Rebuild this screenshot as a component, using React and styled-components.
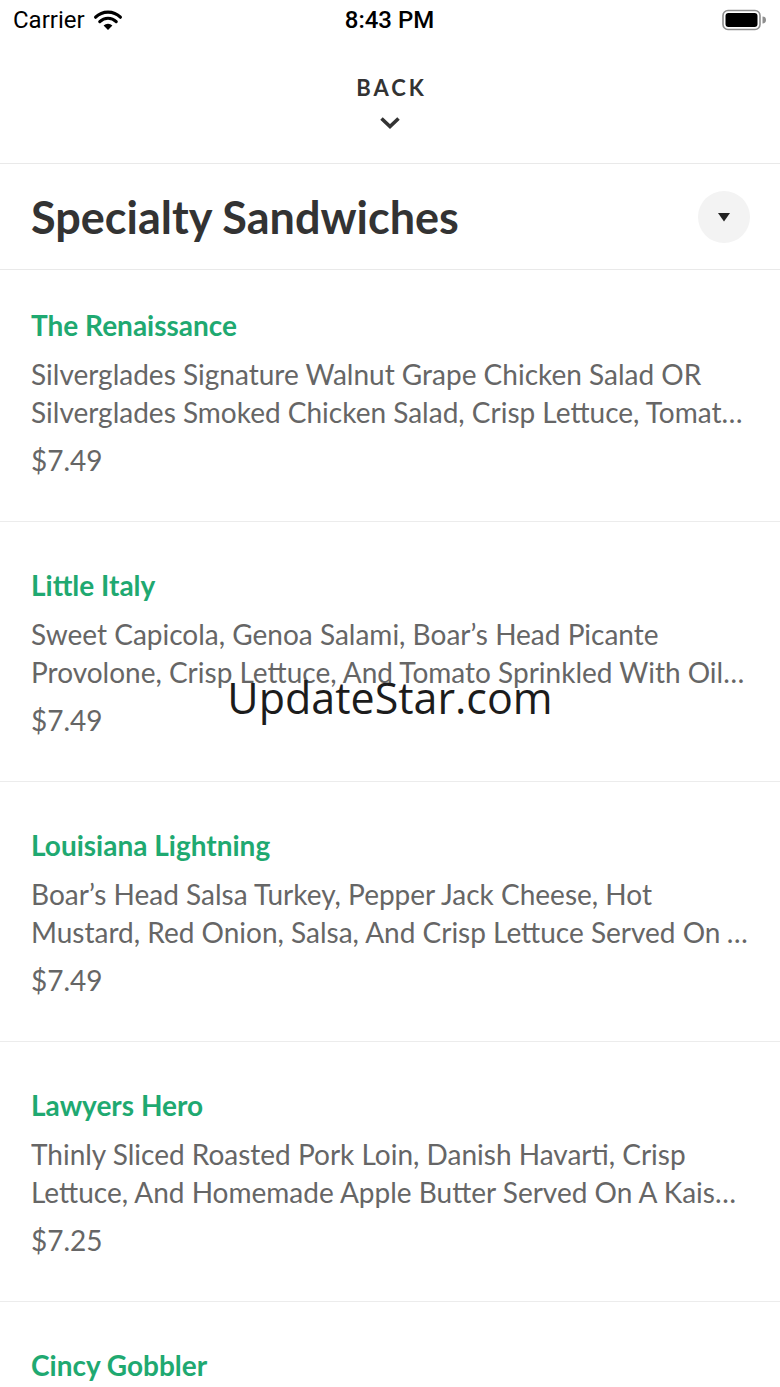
import React from 'react';
import styled, { createGlobalStyle } from 'styled-components';

const GlobalStyle = createGlobalStyle`
  body {
    margin: 0;
    background: #ffffff;
    font-family: Lato, "Open Sans", sans-serif;
  }
  * { box-sizing: border-box; }
`;

const Screen = styled.div`
  position: relative;
  width: 780px;
  height: 1387px;
  overflow: hidden;
  background: #ffffff;
`;

const StatusBar = styled.div`
  height: 40px;
  display: grid;
  grid-template-columns: 1fr auto 1fr;
  align-items: center;
  padding: 0 14px 0 13px;
  font-family: Roboto, "Liberation Sans", sans-serif;
  color: #000;
`;

const Carrier = styled.div`
  display: flex;
  align-items: center;
  gap: 8px;
  font-size: 24px;
`;

const Clock = styled.div`
  font-size: 24px;
  font-weight: 500;
`;

const BatteryWrap = styled.div`
  display: flex;
  justify-content: flex-end;
`;

const BackBar = styled.div`
  height: 124px;
  display: flex;
  flex-direction: column;
  align-items: center;
  padding-top: 34px;
  border-bottom: 1px solid #e9e9e9;
`;

const BackLabel = styled.div`
  font-size: 22px;
  font-weight: 700;
  letter-spacing: 3px;
  color: #333;
  line-height: 28px;
  margin-left: 3px;
`;

const Chevron = styled.div`
  margin-top: 14px;
  height: 14px;
  display: flex;
`;

const CategoryHeader = styled.div`
  height: 106px;
  display: flex;
  align-items: center;
  justify-content: space-between;
  padding: 0 31px;
  border-bottom: 1px solid #e9e9e9;
`;

const CategoryTitle = styled.h1`
  margin: 0;
  font-size: 45px;
  font-weight: 700;
  color: #333;
  line-height: 52px;
`;

const ToggleButton = styled.button`
  width: 52px;
  height: 52px;
  border-radius: 50%;
  border: none;
  background: #f3f3f3;
  display: flex;
  align-items: center;
  justify-content: center;
  padding: 0;
  margin-right: -1px;
`;

const Item = styled.div`
  padding: ${p => (p.first ? '35px' : '43px')} 31px 42px;
  border-bottom: 1px solid #ececec;
`;

const ItemTitle = styled.div`
  font-size: 28px;
  font-weight: 700;
  color: #1fa971;
  line-height: 40px;
`;

const ItemDesc = styled.div`
  margin-top: 10px;
  font-size: 28px;
  line-height: 38px;
  color: #666;
  display: -webkit-box;
  -webkit-line-clamp: 2;
  -webkit-box-orient: vertical;
  overflow: hidden;
`;

const ItemPrice = styled.div`
  margin-top: 10px;
  font-size: 28px;
  line-height: 38px;
  color: #666;
`;

const Watermark = styled.div`
  position: absolute;
  left: 0;
  right: 0;
  top: 670px;
  text-align: center;
  font-family: "Open Sans", "Noto Sans", sans-serif;
  font-size: 43px;
  line-height: 56px;
  color: #1c1c1c;
  pointer-events: none;
`;

const Wifi = () => (
  <svg width="30" height="22" viewBox="0 0 30 22">
    <path d="M15 21 L10.6 16.4 A6.5 6.5 0 0 1 19.4 16.4 Z" fill="#000" />
    <path d="M6.8 12.6 A11.7 11.7 0 0 1 23.2 12.6" stroke="#000" strokeWidth="3.2" fill="none" strokeLinecap="round" />
    <path d="M2.6 8.2 A17.6 17.6 0 0 1 27.4 8.2" stroke="#000" strokeWidth="3.2" fill="none" strokeLinecap="round" />
  </svg>
);

const Battery = () => (
  <svg width="44" height="22" viewBox="0 0 44 22">
    <rect x="1" y="1.5" width="37" height="19" rx="5" fill="none" stroke="#8e8e8e" strokeWidth="1.6" />
    <rect x="3.5" y="4" width="32" height="14" rx="3" fill="#000" />
    <path d="M40.5 7.5 A3.5 3.5 0 0 1 40.5 14.5 Z" fill="#8e8e8e" />
  </svg>
);

const items = [
  {
    name: 'The Renaissance',
    desc: 'Silverglades Signature Walnut Grape Chicken Salad OR Silverglades Smoked Chicken Salad, Crisp Lettuce, Tomato And Red Onion Served On A Croissant',
    price: '$7.49',
  },
  {
    name: 'Little Italy',
    desc: 'Sweet Capicola, Genoa Salami, Boar\u2019s Head Picante Provolone, Crisp Lettuce, And Tomato Sprinkled With Oil And Vinegar Served On A Hoagie',
    price: '$7.49',
  },
  {
    name: 'Louisiana Lightning',
    desc: 'Boar\u2019s Head Salsa Turkey, Pepper Jack Cheese, Hot Mustard, Red Onion, Salsa, And Crisp Lettuce Served On A Jalapeño Bun',
    price: '$7.49',
  },
  {
    name: 'Lawyers Hero',
    desc: 'Thinly Sliced Roasted Pork Loin, Danish Havarti, Crisp Lettuce, And Homemade Apple Butter Served On A Kaiser Roll',
    price: '$7.25',
  },
  {
    name: 'Cincy Gobbler',
    desc: 'Boar\u2019s Head Ovengold Turkey, Swiss Cheese, Crisp Lettuce, Tomato And Cranberry Mayo Served On Wheat Berry Bread',
    price: '$7.49',
  },
];

export default function App() {
  return (
    <Screen>
      <GlobalStyle />
      <StatusBar>
        <Carrier>
          Carrier
          <Wifi />
        </Carrier>
        <Clock>8:43 PM</Clock>
        <BatteryWrap>
          <Battery />
        </BatteryWrap>
      </StatusBar>
      <BackBar>
        <BackLabel>BACK</BackLabel>
        <Chevron>
          <svg width="22" height="14" viewBox="0 0 22 14">
            <path d="M2.5 2.5 L11 10.5 L19.5 2.5" stroke="#333" strokeWidth="3.6" fill="none" />
          </svg>
        </Chevron>
      </BackBar>
      <CategoryHeader>
        <CategoryTitle>Specialty Sandwiches</CategoryTitle>
        <ToggleButton>
          <svg width="14" height="10" viewBox="0 0 14 10">
            <path d="M1 1 L13 1 L7 9.5 Z" fill="#222" />
          </svg>
        </ToggleButton>
      </CategoryHeader>
      {items.map((it, i) => (
        <Item key={it.name} first={i === 0}>
          <ItemTitle>{it.name}</ItemTitle>
          <ItemDesc>{it.desc}</ItemDesc>
          <ItemPrice>{it.price}</ItemPrice>
        </Item>
      ))}
      <Watermark>UpdateStar.com</Watermark>
    </Screen>
  );
}
